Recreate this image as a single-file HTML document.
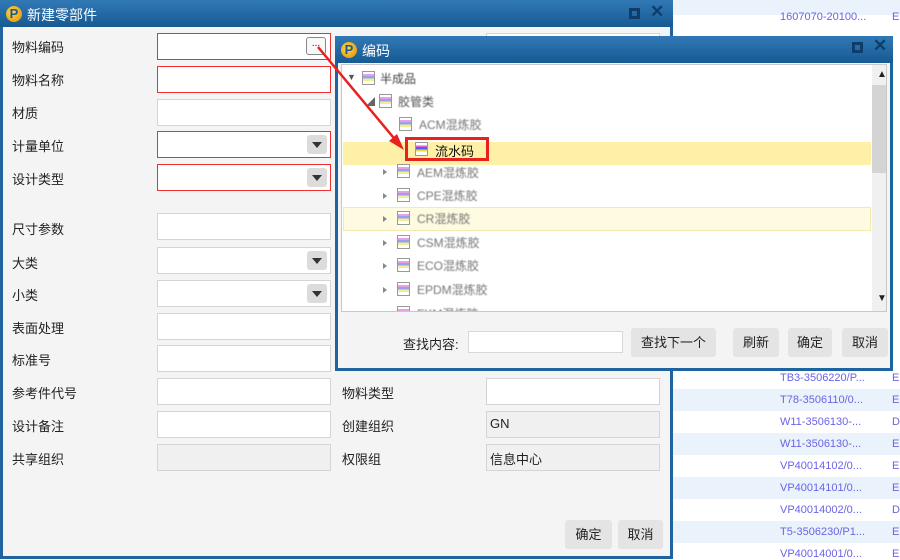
<!DOCTYPE html>
<html><head><meta charset="utf-8"><style>
*{box-sizing:border-box;margin:0;padding:0}
body{width:900px;height:559px;overflow:hidden;background:#fff;font-family:"Liberation Sans","Noto Sans CJK SC",sans-serif;font-size:13px;color:#222;position:relative}
.a{position:absolute}
.row{position:absolute;left:673px;width:227px;height:22px}
.lt{background:#eaf2fb}
.lk{position:absolute;left:780px;color:#6b63e6;font-size:11px}
.lk2{position:absolute;left:892px;color:#6b63e6;font-size:11px}
.title{background:linear-gradient(#3179b5,#175a94);color:#fff}
.logo{position:absolute;width:16px;height:16px;border-radius:50%;background:radial-gradient(circle at 40% 40%,#ffd84a,#e08a00);color:#1a5a93;font-weight:bold;font-size:13px;line-height:16px;text-align:center}
.lab{position:absolute;left:12px;font-size:13px}
.lab2{position:absolute;left:342px;font-size:13px}
.in{position:absolute;height:27px;background:#fff;border:1px solid #d4d4d4}
.red{border:1px solid #f03030}
.gray{background:#f0f0f0}
.dd{position:absolute;right:3px;top:3px;width:20px;height:19px;background:#dcdcdc;border-radius:3px}
.dd:after{content:"";position:absolute;left:5px;top:7px;border-left:5px solid transparent;border-right:5px solid transparent;border-top:6px solid #333}
.btn{position:absolute;background:#e4e4e4;border-radius:3px;text-align:center;line-height:29px;font-size:13px;color:#222}
.ti{position:absolute;font-size:12px;color:#777;filter:blur(0.6px)}
.ic{position:absolute;width:13px;height:14px;border:1px solid #999;background:linear-gradient(#fff 15%,#e8a0e8 15%,#e8a0e8 35%,#9aa0f0 35%,#9aa0f0 55%,#f0f090 55%,#f0f090 75%,#fff 75%)}
.tri{position:absolute;width:0;height:0;border-top:3px solid transparent;border-bottom:3px solid transparent;border-left:4px solid #888}
</style></head><body>
<div class="row lt" style="top:-7px"></div>
<div class="row" style="top:15px;height:20px;background:#fff"></div>
<span class="lk" style="top:11px">1607070-20100...</span><span class="lk2" style="top:11px">E</span>
<div class="row lt" style="top:389px"></div><div class="row lt" style="top:433px"></div><div class="row lt" style="top:477px"></div><div class="row lt" style="top:521px"></div>
<span class="lk" style="top:372px">TB3-3506220/P...</span><span class="lk2" style="top:372px">E</span>
<span class="lk" style="top:394px">T78-3506110/0...</span><span class="lk2" style="top:394px">E</span>
<span class="lk" style="top:416px">W11-3506130-...</span><span class="lk2" style="top:416px">D</span>
<span class="lk" style="top:438px">W11-3506130-...</span><span class="lk2" style="top:438px">E</span>
<span class="lk" style="top:460px">VP40014102/0...</span><span class="lk2" style="top:460px">E</span>
<span class="lk" style="top:482px">VP40014101/0...</span><span class="lk2" style="top:482px">E</span>
<span class="lk" style="top:504px">VP40014002/0...</span><span class="lk2" style="top:504px">D</span>
<span class="lk" style="top:526px">T5-3506230/P1...</span><span class="lk2" style="top:526px">E</span>
<span class="lk" style="top:548px">VP40014001/0...</span><span class="lk2" style="top:548px">E</span>

<div class="a" style="left:0;top:0;width:673px;height:559px;background:#f4f4f4;border:3px solid #1f64a0;border-top:none"></div>
<div class="a title" style="left:0;top:0;width:673px;height:27px"></div>
<div class="logo" style="left:6px;top:6px">P</div>
<div class="a" style="left:27px;top:5px;color:#fff;font-size:14px">新建零部件</div>
<div class="a" style="left:629px;top:8px;width:11px;height:11px;border:3px solid #0e3d6a"></div>
<div class="a" style="left:650px;top:2px;color:#0e3d6a;font-size:17px;font-weight:bold">✕</div>

<div class="lab" style="top:37px">物料编码</div>
<div class="lab" style="top:70px">物料名称</div>
<div class="lab" style="top:103px">材质</div>
<div class="lab" style="top:136px">计量单位</div>
<div class="lab" style="top:169px">设计类型</div>
<div class="lab" style="top:219px">尺寸参数</div>
<div class="lab" style="top:253px">大类</div>
<div class="lab" style="top:285px">小类</div>
<div class="lab" style="top:318px">表面处理</div>
<div class="lab" style="top:350px">标准号</div>
<div class="lab" style="top:383px">参考件代号</div>
<div class="lab" style="top:416px">设计备注</div>
<div class="lab" style="top:449px">共享组织</div>

<div class="in red" style="left:157px;top:33px;width:174px"><div class="a" style="left:148px;top:3px;width:20px;height:18px;border:1px solid #888;border-radius:3px;background:#f8f8f8;font-size:10px;line-height:12px;text-align:center">...</div></div>
<div class="in red" style="left:157px;top:66px;width:174px"></div>
<div class="in" style="left:157px;top:99px;width:174px"></div>
<div class="in red" style="left:157px;top:131px;width:174px"><div class="dd"></div></div>
<div class="in red" style="left:157px;top:164px;width:174px"><div class="dd"></div></div>
<div class="in" style="left:157px;top:213px;width:174px"></div>
<div class="in" style="left:157px;top:247px;width:174px"><div class="dd"></div></div>
<div class="in" style="left:157px;top:280px;width:174px"><div class="dd"></div></div>
<div class="in" style="left:157px;top:313px;width:174px"></div>
<div class="in" style="left:157px;top:345px;width:174px"></div>
<div class="in" style="left:157px;top:378px;width:174px"></div>
<div class="in" style="left:157px;top:411px;width:174px"></div>
<div class="in gray" style="left:157px;top:444px;width:174px"></div>

<div class="lab2" style="top:383px">物料类型</div>
<div class="lab2" style="top:416px">创建组织</div>
<div class="lab2" style="top:449px">权限组</div>
<div class="in" style="left:486px;top:378px;width:174px"></div>
<div class="in gray" style="left:486px;top:411px;width:174px;padding:4px 3px">GN</div>
<div class="in gray" style="left:486px;top:444px;width:174px;padding:4px 3px">信息中心</div>
<div class="in" style="left:486px;top:33px;width:174px"></div>

<div class="btn" style="left:565px;top:520px;width:47px">确定</div>
<div class="btn" style="left:618px;top:520px;width:45px">取消</div>

<div class="a" style="left:335px;top:36px;width:558px;height:335px;background:#f4f4f4;border:3px solid #1f64a0;border-top:none"></div>
<div class="a title" style="left:335px;top:36px;width:558px;height:27px"></div>
<div class="logo" style="left:341px;top:42px">P</div>
<div class="a" style="left:362px;top:41px;color:#fff;font-size:14px">编码</div>
<div class="a" style="left:852px;top:42px;width:11px;height:11px;border:3px solid #0e3d6a"></div>
<div class="a" style="left:873px;top:36px;color:#0e3d6a;font-size:17px;font-weight:bold">✕</div>

<div class="a" style="left:341px;top:64px;width:546px;height:248px;background:#fff;border:1px solid #c8c8c8;overflow:hidden">
 <div class="a" style="left:1px;top:77px;width:528px;height:23px;background:#fff0a8"></div>
 <div class="a" style="left:1px;top:142px;width:528px;height:24px;background:#fffbe0;border:1px solid #f2eab0"></div>
 <div class="a" style="left:530px;top:0;width:15px;height:247px;background:#f0f0f0"></div>
 <div class="a" style="left:530px;top:20px;width:15px;height:88px;background:#d4d4d4"></div>
 <div class="a" style="left:535px;top:4px;font-size:10px">▲</div>
 <div class="a" style="left:535px;top:228px;font-size:10px">▼</div>
 <div class="a" style="left:5px;top:7px;font-size:9px;color:#555">▼</div>
 <div class="ic" style="left:20px;top:6px"></div><div class="ti" style="left:38px;top:5px;color:#444">半成品</div>
 <div class="a" style="left:24px;top:30px;font-size:9px;color:#666">◢</div>
 <div class="ic" style="left:37px;top:29px"></div><div class="ti" style="left:56px;top:28px;color:#555">胶管类</div>
 <div class="ic" style="left:57px;top:52px"></div><div class="ti" style="left:77px;top:51px">ACM混炼胶</div>
 <div class="a" style="left:63px;top:72px;width:84px;height:24px;border:3px solid #e8201e"></div>
 <div class="ic" style="left:73px;top:77px;background:linear-gradient(#fff 20%,#e060e0 20%,#e060e0 35%,#5060f0 35%,#5060f0 55%,#e0e040 55%,#e0e040 70%,#fff 70%)"></div>
 <div class="a" style="left:93px;top:76px;font-size:13px;color:#111">流水码</div>
 <div class="tri" style="left:41px;top:104px"></div><div class="ic" style="left:55px;top:99px"></div><div class="ti" style="left:75px;top:99px">AEM混炼胶</div>
 <div class="tri" style="left:41px;top:128px"></div><div class="ic" style="left:55px;top:123px"></div><div class="ti" style="left:75px;top:122px">CPE混炼胶</div>
 <div class="tri" style="left:41px;top:151px"></div><div class="ic" style="left:55px;top:146px"></div><div class="ti" style="left:75px;top:145px">CR混炼胶</div>
 <div class="tri" style="left:41px;top:175px"></div><div class="ic" style="left:55px;top:170px"></div><div class="ti" style="left:75px;top:169px">CSM混炼胶</div>
 <div class="tri" style="left:41px;top:198px"></div><div class="ic" style="left:55px;top:193px"></div><div class="ti" style="left:75px;top:192px">ECO混炼胶</div>
 <div class="tri" style="left:41px;top:222px"></div><div class="ic" style="left:55px;top:217px"></div><div class="ti" style="left:75px;top:216px">EPDM混炼胶</div>
 <div class="ic" style="left:55px;top:241px"></div><div class="ti" style="left:75px;top:240px">FKM混炼胶</div>
</div>

<div class="a" style="left:403px;top:334px;font-size:13px">查找内容:</div>
<div class="a" style="left:468px;top:331px;width:155px;height:22px;background:#fff;border:1px solid #d8d8d8"></div>
<div class="btn" style="left:631px;top:328px;width:85px">查找下一个</div>
<div class="btn" style="left:733px;top:328px;width:46px">刷新</div>
<div class="btn" style="left:788px;top:328px;width:44px">确定</div>
<div class="btn" style="left:842px;top:328px;width:46px">取消</div>

<svg class="a" style="left:0;top:0" width="900" height="559">
 <line x1="318" y1="47" x2="398" y2="143" stroke="#e8201e" stroke-width="2.5"/>
 <polygon points="404,150 389,141 397,134" fill="#e8201e"/>
</svg>
</body></html>
